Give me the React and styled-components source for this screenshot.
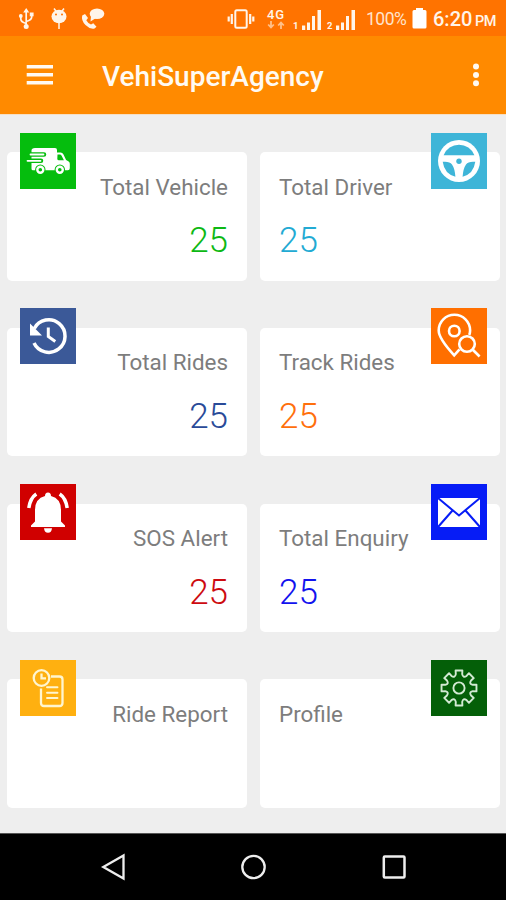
import React from "react";
import styled, {createGlobalStyle} from "styled-components";


const GlobalStyle = createGlobalStyle`
    body {
        margin: 0;
        background: #000;
    }

    * {
        box-sizing: border-box;
    }

    svg {
        display: block;
        flex: none;
        overflow: visible;
    }
`

const Screen = styled.div`
    display: flex;
    flex-direction: column;
    width: 506px;
    height: 900px;
    overflow: hidden;
    background: #eeeeee;
    font-family: Roboto, "Noto Sans", sans-serif;
`

const StatusBar = styled.div`
    display: flex;
    justify-content: space-between;
    align-items: center;
    height: 36px;
    padding: 1px 10px 0 18px;
    background: #ff7300;
    color: #fff5ea;
`

const StatusGroup = styled.div`
    display: flex;
    align-items: center;
    gap: ${({gap}) => gap || 0}px;
`

const Network = styled.div`
    display: flex;
    flex-direction: column;
    align-items: center;
    width: 22px;
    margin-left: 10px;
    font-size: 13px;
    font-weight: 500;
    line-height: 13px;
    letter-spacing: 1px;
`

const Sim = styled.div`
    display: flex;
    align-items: flex-end;
    justify-content: space-between;
    width: 29px;
    height: 20px;
    margin: 3px 0 0 ${({left}) => left}px;
    font-size: 9.5px;
    font-weight: 700;
    line-height: 8px;
`

const Percent = styled.div`
    width: 40px;
    margin: 1px 6px 0 10px;
    font-size: 17.5px;
    line-height: 20px;
    letter-spacing: -0.5px;
    white-space: nowrap;
    color: #ffe3cb;
`

const Clock = styled.div`
    display: flex;
    align-items: baseline;
    justify-content: space-between;
    width: 63px;
    margin: 3px 0 0 6px;
    font-size: 20px;
    font-weight: 500;
    line-height: 22px;

    span {
        font-size: 14.5px;
        letter-spacing: -0.5px;
    }
`

const AppBar = styled.div`
    display: flex;
    align-items: center;
    height: 78px;
    padding: 0 26px 0 26px;
    background: #ff8a00;
    color: #fffaf2;
`

const Title = styled.div`
    flex: 1;
    margin-left: 48px;
    padding-top: 3px;
    font-size: 28px;
    font-weight: 500;
    line-height: 34px;
`

const Dashboard = styled.div`
    display: grid;
    grid-template-columns: 239.5px 239.5px;
    grid-auto-rows: 128.5px;
    column-gap: 13.5px;
    row-gap: 47.3px;
    height: 719px;
    padding: 37px 0 0 7px;
    border-top: 1px solid #f6dfc4;
`

const CardStyle = styled.div`
    position: relative;
    padding: 20.5px 18.5px 0 19px;
    border-radius: 5px;
    background: #fff;
    text-align: ${({side}) => side === "left" ? "right" : "left"};
`

const Tile = styled.div`
    position: absolute;
    top: -19.5px;
    ${({side}) => side}: 13px;
    width: 56px;
    height: 56px;
    background: ${({color}) => color};
`

const Label = styled.div`
    font-size: 22.4px;
    line-height: 28px;
    color: #7d7d7d;
    white-space: nowrap;
`

const Value = styled.div`
    margin-top: 19.5px;
    font-size: 35px;
    font-weight: 300;
    line-height: 42px;
    color: ${({color}) => color};
`

const NavBar = styled.div`
    display: flex;
    justify-content: space-between;
    align-items: center;
    height: 67px;
    padding: 0 99px 0 100px;
    border-top: 1px solid #555;
    background: #000;
`


const TruckIcon = () => (
    <svg width="56" height="56" viewBox="0 0 56 56">
        <path d="M15 15h20q2 0 2 2v2.500h3.500q2 0 3 2l2.600 5.500 2.200 1.200q1.500.8 1.500 2.500v4.500q0 2-2 2H13q-1.500 0-1.500-1.500v-18.200q0-2.500 3.500-2.500z" fill="#fff"/>
        <path d="M37.500 21.500h2.300q1.200 0 1.800 1.200l2.300 4.600h-5q-1.600 0-1.600-1.600z" fill="#05bd0d"/>
        <path d="M11 21.500h13M8 27.800h13" stroke="#05bd0d" strokeWidth="4.500" strokeLinecap="round"/>
        <path d="M10.500 21.500h13M7.500 27.800h13" stroke="#fff" strokeWidth="1.800" strokeLinecap="round"/>
        {[20.3, 39.8].map(x => (
            <g key={x}>
                <circle cx={x} cy="36.800" r="5.200" fill="#05bd0d"/>
                <circle cx={x} cy="36.800" r="3" fill="none" stroke="#fff" strokeWidth="2.400"/>
            </g>
        ))}
    </svg>
)

const WheelIcon = () => (
    <svg width="56" height="56" viewBox="0 0 56 56">
        <circle cx="28" cy="28" r="21" fill="#fff"/>
        <path d="M12.600 22.300a16.500 16.500 0 0 1 30.800 0zM11.700 28.800q6.800-.8 9.300 2.700 2.800 4 3.400 12.200-11-2.700-12.700-14.900zM44.300 28.800q-6.800-.8-9.300 2.700-2.800 4-3.400 12.200 11-2.700 12.700-14.900z" fill="#3eb5d8"/>
        <circle cx="28" cy="28.300" r="2.700" fill="#3eb5d8"/>
    </svg>
)

const HistoryIcon = () => (
    <svg width="56" height="56" viewBox="0 0 56 56" fill="none" stroke="#fff">
        <path d="M14.300 20.500A16.300 16.300 0 1 1 14 35" strokeWidth="3.500"/>
        <path d="M10 15.500v12h12z" fill="#fff" stroke="none"/>
        <path d="M28.300 19.500v9l7 5" strokeWidth="3"/>
    </svg>
)

const TrackIcon = () => (
    <svg width="56" height="56" viewBox="0 0 56 56" fill="none" stroke="#fff" strokeWidth="2.600">
        <path d="M38.300 27q.8-2.500.8-4.500a15.700 15.700 0 0 0-31.400 0q0 8 15.500 24.800l5.300-6"/>
        <circle cx="23.300" cy="23" r="5.300"/>
        <circle cx="36" cy="36" r="7.800"/>
        <path d="M41.800 41.800l6.800 6.700"/>
    </svg>
)

const BellIcon = () => (
    <svg width="56" height="56" viewBox="0 0 56 56" fill="#fff">
        <path d="M25 12q0-3.500 3-3.500t3 3.500q10 2.500 10 14v11.500l4 4V43H11v-1.500l4-4V26Q15 14.500 25 12z"/>
        <path d="M24 44.300h8q-.5 4.500-4 4.500t-4-4.500z"/>
        <path d="M16.300 10q-6 4-7.500 14M39.700 10q6 4 7.500 14" fill="none" stroke="#fff" strokeWidth="3.500"/>
    </svg>
)

const MailIcon = () => (
    <svg width="56" height="56" viewBox="0 0 56 56">
        <rect x="7" y="14" width="42" height="29" fill="#fff"/>
        <path d="M7 14l21 17.500L49 14M7 43l14.500-16.500M49 43L34.500 26.500" fill="none" stroke="#061cf6" strokeWidth="2"/>
    </svg>
)

const ReportIcon = () => (
    <svg width="56" height="56" viewBox="0 0 56 56" fill="none" stroke="#fff5cf" strokeWidth="2.300">
        <circle cx="21.500" cy="18" r="7.800"/>
        <path d="M21.500 13.500v4.800H26M31 16.500h8.500q3 0 3 3V43q0 3-3 3H24q-3 0-3-3V28.500"/>
        <path d="M27 27.300h10.500M27 32.700h10.500M27 38h10.500" strokeWidth="1.900" strokeLinecap="round"/>
    </svg>
)

// eight-toothed outline, one tooth per 45 degrees
const gearPath = Array.from({length: 8}, (_, i) => {
    const at = (deg, r) => {
        const a = (i * 45 + deg - 90) * Math.PI / 180;
        return `${(28 + r * Math.cos(a)).toFixed(2)} ${(28 + r * Math.sin(a)).toFixed(2)}`;
    }
    return `${i ? "L" : "M"}${at(-13, 14.2)}L${at(-11, 17.8)}L${at(11, 17.8)}L${at(13, 14.2)}Q${at(22.5, 10.5)} ${at(32, 14.2)}`;
}).join("") + "Z";

const GearIcon = () => (
    <svg width="56" height="56" viewBox="0 0 56 56" fill="none" stroke="#d3ead3" strokeWidth="1.900" strokeLinejoin="round">
        <path d={gearPath}/>
        <circle cx="28" cy="28" r="5.600"/>
    </svg>
)

const UsbIcon = () => (
    <svg width="17" height="22" viewBox="0 0 17 22" fill="none" stroke="currentColor" strokeWidth="1.700">
        <path d="M8.200 3v14M8.200 15.500Q2.800 14 2.800 11V8M8.200 13.500q5.500-1.500 5.500-4.500V6"/>
        <path d="M8.200 0l3 4.500h-6z" fill="currentColor" stroke="none"/>
        <circle cx="2.800" cy="8" r="1.900" fill="currentColor" stroke="none"/>
        <path d="M11.800 4.500h3.800v3.800h-3.800z" fill="currentColor" stroke="none"/>
        <circle cx="8.200" cy="18.500" r="2.500" fill="currentColor" stroke="none"/>
    </svg>
)

const DebugIcon = () => (
    <svg width="18" height="22" viewBox="-2 0 18 22">
        <path d="M3 .5l3 4M13 .5l-3 4M8 14v7" stroke="currentColor" strokeWidth="1.500"/>
        <ellipse cx="8" cy="8.500" rx="7.500" ry="6.800" fill="currentColor"/>
        <circle cx="5" cy="6.500" r="1" fill="#ff7300"/>
        <circle cx="11" cy="6.500" r="1" fill="#ff7300"/>
    </svg>
)

const CallIcon = () => (
    <svg width="24" height="22" viewBox="0 0 24 22" fill="currentColor">
        <path d="M1.200 7.500L4 6l3 4-1.700 2.300q1.500 3 4.700 4.300l2.300-1.300 3.200 3.500-2 1.700Q9 21.500 4.500 17T1.200 7.500z"/>
        <ellipse cx="16" cy="5.800" rx="7.300" ry="5.300"/>
        <path d="M10 8l-.5 5.500L15 10z"/>
    </svg>
)

const VibrateIcon = () => (
    <svg width="28" height="22" viewBox="0 0 28 22" fill="none" stroke="currentColor">
        <rect x="8.300" y="2.200" width="11.400" height="17.600" rx="1.500" strokeWidth="2"/>
        <path d="M4.800 6v10M23.200 6v10M1.700 8.500v5M26.300 8.500v5" strokeWidth="2.200"/>
    </svg>
)

const DataArrows = () => (
    <svg width="18" height="8" viewBox="0 0 18 8" fill="none" stroke="#ffc08a" strokeWidth="1.800">
        <path d="M4 0v6M1.200 3.500L4 6.500l2.800-3M14 8V2M11.200 4.500L14 1.500l2.800 3"/>
    </svg>
)

const SignalBars = () => (
    <svg width="20" height="20" viewBox="0 0 20 20" fill="currentColor">
        <path d="M0 15.500h3.200V20H0zM5 12.500h3v7.500H5zM10 6h3v14h-3zM15.500 0h3.500v20h-3.500z"/>
    </svg>
)

const BatteryIcon = () => (
    <svg width="15" height="21" viewBox="0 0 15 21" fill="#fff">
        <path d="M4 0h7v2h2q1.500 0 1.500 1.500v15.500q0 1.500-1.500 1.500H2Q.5 20.500.5 19V3.500Q.5 2 2 2h2z"/>
    </svg>
)

const MenuIcon = () => (
    <svg width="28" height="20" viewBox="0 0 28 20" fill="currentColor">
        <path d="M.7 0h26.300v3.500H.7zM.7 8h26.300v3.500H.7zM.7 16h26.300v3.500H.7z"/>
    </svg>
)

const MoreIcon = () => (
    <svg width="8" height="24" viewBox="0 0 8 24" fill="currentColor">
        <circle cx="4" cy="3.500" r="3"/>
        <circle cx="4" cy="12" r="3"/>
        <circle cx="4" cy="20.300" r="3"/>
    </svg>
)

const BackIcon = () => (
    <svg width="27" height="28" viewBox="0 0 27 28" fill="none" stroke="#eee" strokeWidth="2.300">
        <path d="M3.300 14L23.500 2.500v23z"/>
    </svg>
)

const HomeIcon = () => (
    <svg width="27" height="28" viewBox="0 0 27 28" fill="none" stroke="#eee" strokeWidth="2.300">
        <circle cx="13.500" cy="14" r="11.200"/>
    </svg>
)

const RecentIcon = () => (
    <svg width="27" height="28" viewBox="0 0 27 28" fill="none" stroke="#eee" strokeWidth="2.500">
        <rect x="3.800" y="3.500" width="20.700" height="21" rx="1"/>
    </svg>
)


const cards = [
    {label: "Total Vehicle", value: "25", tile: "#05bd0d", color: "#0db814", icon: <TruckIcon/>},
    {label: "Total Driver", value: "25", tile: "#3eb5d8", color: "#22aad3", icon: <WheelIcon/>},
    {label: "Total Rides", value: "25", tile: "#3b5998", color: "#294a98", icon: <HistoryIcon/>},
    {label: "Track Rides", value: "25", tile: "#ff6f00", color: "#ff6f0c", icon: <TrackIcon/>},
    {label: "SOS Alert", value: "25", tile: "#d00000", color: "#cd0a10", icon: <BellIcon/>},
    {label: "Total Enquiry", value: "25", tile: "#061cf6", color: "#1212ee", icon: <MailIcon/>},
    {label: "Ride Report", tile: "#ffb010", icon: <ReportIcon/>},
    {label: "Profile", tile: "#045f08", icon: <GearIcon/>}
]


const Card = ({item, side}) => (
    <CardStyle side={side}>
        <Tile side={side} color={item.tile}>{item.icon}</Tile>
        <Label>{item.label}</Label>
        {item.value && <Value color={item.color}>{item.value}</Value>}
    </CardStyle>
)


const App = () => {
    return (<Screen>
        <GlobalStyle/>

        <StatusBar>
            <StatusGroup gap={14}>
                <UsbIcon/>
                <DebugIcon/>
                <CallIcon/>
            </StatusGroup>
            <StatusGroup>
                <VibrateIcon/>
                <Network>
                    4G
                    <DataArrows/>
                </Network>
                <Sim left={6}>1<SignalBars/></Sim>
                <Sim left={5}>2<SignalBars/></Sim>
                <Percent>100%</Percent>
                <BatteryIcon/>
                <Clock>6:20<span>PM</span></Clock>
            </StatusGroup>
        </StatusBar>

        <AppBar>
            <MenuIcon/>
            <Title>VehiSuperAgency</Title>
            <MoreIcon/>
        </AppBar>

        <Dashboard>
            {cards.map((item, i) => (
                <Card key={item.label} item={item} side={i % 2 ? "right" : "left"}/>
            ))}
        </Dashboard>

        <NavBar>
            <BackIcon/>
            <HomeIcon/>
            <RecentIcon/>
        </NavBar>
    </Screen>)
}

export default App;
